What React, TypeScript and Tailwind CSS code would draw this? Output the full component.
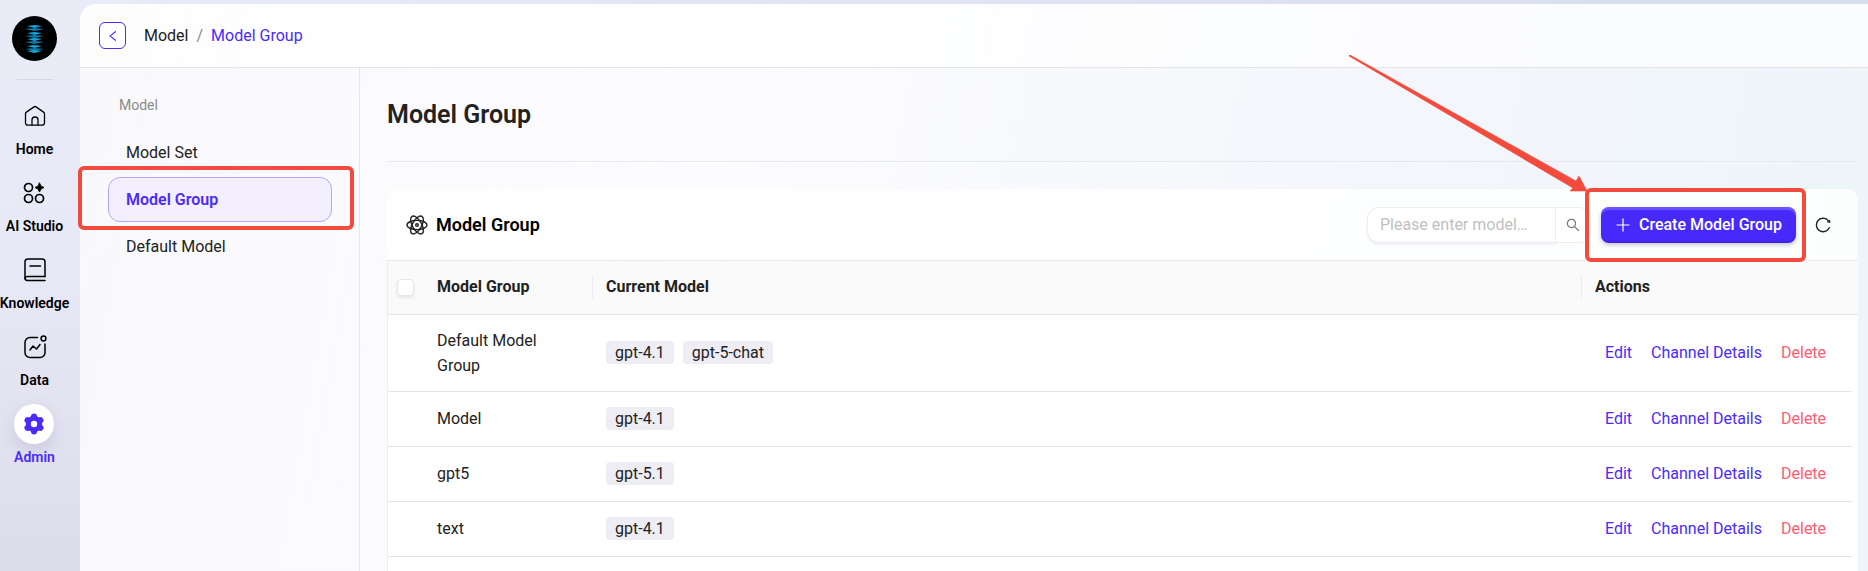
import React, { useState } from 'react';
import { AiOutlineLeft, AiOutlineReload, AiOutlineSearch } from 'react-icons/ai';

interface ModelGroup {
  name: string;
  models: string[];
}

const groups: ModelGroup[] = [
  { name: 'Default Model Group', models: ['gpt-4.1', 'gpt-5-chat'] },
  { name: 'Model', models: ['gpt-4.1'] },
  { name: 'gpt5', models: ['gpt-5.1'] },
  { name: 'text', models: ['gpt-4.1'] },
];

const iconProps = {
  width: 24,
  height: 24,
  viewBox: '0 0 24 24',
  fill: 'none',
  stroke: 'currentColor',
  strokeWidth: 1.5,
  strokeLinecap: 'round' as const,
  strokeLinejoin: 'round' as const,
  'aria-hidden': true,
};

function HomeIcon() {
  return (
    <svg {...iconProps} strokeWidth={1.3}>
      <path d="M11 2.9a1.6 1.6 0 0 1 2 0l7.6 5.2a2 2 0 0 1 .9 1.7V19a2.2 2.2 0 0 1-2.2 2.2H4.7A2.2 2.2 0 0 1 2.5 19V9.8a2 2 0 0 1 .9-1.7Z" />
      <path d="M9 21v-5a3 3 0 0 1 6 0v5" />
    </svg>
  );
}

function StudioIcon() {
  return (
    <svg {...iconProps} strokeWidth={1.7}>
      <circle cx="6.5" cy="6.5" r="4" />
      <circle cx="6.5" cy="17.5" r="4" />
      <circle cx="17.5" cy="17.5" r="4" />
      <path d="M17.500 2 19.100 5l2.900 1.500-2.900 1.600-1.600 2.900-1.600-2.900L13 6.500 15.900 5Z" fill="currentColor" strokeWidth="0.8" />
    </svg>
  );
}

function BookIcon() {
  return (
    <svg {...iconProps}>
      <path d="M22 18.5V4a3 3 0 0 0-3-3H5a3 3 0 0 0-3 3v16a2.5 2.5 0 0 0 2.5 2.5H22" />
      <path d="M22 18.5H4.5A2.4 2.4 0 0 0 2 20.500M7 8h10.500" />
    </svg>
  );
}

function DataIcon() {
  return (
    <svg {...iconProps}>
      <path d="M14.5 2.5H7A5 5 0 0 0 2 7.5v10a5 5 0 0 0 5 5h10a5 5 0 0 0 5-5V9" />
      <path d="m7 15 3-4 3.500 3 3.500-4.500" />
      <circle cx="20.5" cy="3.5" r="2.4" />
    </svg>
  );
}

function AdminIcon() {
  return (
    <svg {...iconProps}>
      <circle cx="12" cy="12" r="7.5" fill="currentColor" />
      <path d="M12 4.500v15M5.500 8.200l13 7.600M18.500 8.200l-13 7.600" strokeWidth="6" />
      <circle cx="12" cy="12" r="3.2" fill="#fff" stroke="none" />
    </svg>
  );
}

function ModelIcon() {
  return (
    <svg {...iconProps} strokeWidth={1.4}>
      <ellipse cx="12" cy="12" rx="10" ry="4.6" />
      <ellipse cx="12" cy="12" rx="10" ry="4.6" transform="rotate(60 12 12)" />
      <ellipse cx="12" cy="12" rx="10" ry="4.6" transform="rotate(120 12 12)" />
      <circle cx="12" cy="12" r="1.3" />
    </svg>
  );
}

function Logo() {
  return (
    <svg width="45" height="45" viewBox="0 0 45 45" role="img" aria-label="Logo">
      <circle cx="22.5" cy="22.5" r="22.5" fill="#000" />
      {[10, 13, 17, 20, 23, 26, 30, 33, 35].map((y, i) => (
        <path
          key={y}
          d={`M${i % 2 ? 13 : 15} ${y}L22.5 ${y - 1}L${i % 2 ? 32 : 30} ${y}L22.5 ${y + 2}Z`}
          fill={i % 2 ? '#0b7aa8' : '#1aa3d8'}
        />
      ))}
    </svg>
  );
}

const navItems = [
  { label: 'Home', icon: <HomeIcon /> },
  { label: 'AI Studio', icon: <StudioIcon /> },
  { label: 'Knowledge', icon: <BookIcon /> },
  { label: 'Data', icon: <DataIcon /> },
  { label: 'Admin', icon: <AdminIcon />, active: true },
];

function Sidebar() {
  return (
    <aside className="w-20 shrink-0 pt-4">
      <div className="flex w-[69px] flex-col items-center">
        <Logo />
        <div className="mt-[18px] mb-4 h-px w-9 bg-[#d5d7e3]" />
        <nav className="flex flex-col items-center gap-3">
          {navItems.map(item => (
            <a
              key={item.label}
              href="#"
              className={`flex flex-col items-center text-sm leading-6 font-semibold ${item.active ? 'text-[#4a2bfb]' : 'text-black'}`}
            >
              <span
                className={`mb-px flex size-10 items-center justify-center rounded-full ${
                  item.active ? 'bg-white shadow-[0_6px_16px_rgba(80,80,140,0.16)]' : ''
                }`}
              >
                {item.icon}
              </span>
              {item.label}
            </a>
          ))}
        </nav>
      </div>
    </aside>
  );
}

function SubNav() {
  const itemCls = 'flex h-[45px] items-center rounded-xl border px-[17px]';

  return (
    <nav className="w-[280px] shrink-0 border-r border-[#e6e7ec] pt-6 pr-[27px] pl-7">
      <p className="mb-3 pl-[11px] text-sm leading-[26px] text-[#8a8a8a]">Model</p>
      <div className="flex flex-col gap-0.5">
        <a href="#" className={`${itemCls} border-transparent`}>Model Set</a>
        <div className="relative">
          <a href="#" className={`${itemCls} border-[#b6a5fa] bg-[#f4effe] font-semibold text-[#4a2bfb]`}>
            Model Group
          </a>
          <div className="pointer-events-none absolute -top-[11px] -right-[22px] -bottom-2 -left-[30px] rounded-md border-4 border-[#f24b3e]" />
        </div>
        <a href="#" className={`${itemCls} border-transparent`}>Default Model</a>
      </div>
    </nav>
  );
}

function Toolbar() {
  const [keyword, setKeyword] = useState('');

  return (
    <div className="flex h-[72px] items-center rounded-t-xl border-b border-[#ebebed] bg-white/85 pr-[26px] pl-[18px]">
      <ModelIcon />
      <h2 className="ml-[7px] text-lg font-semibold text-black">Model Group</h2>
      <form className="ml-auto flex h-9" onSubmit={e => e.preventDefault()}>
        <input
          aria-label="Model"
          className="w-[189px] rounded-l-xl border border-[#ececf1] bg-white px-3 shadow-[0_2px_3px_rgba(60,60,110,0.07)] outline-none placeholder:text-[#bfbfbf]"
          placeholder="Please enter model…"
          value={keyword}
          onChange={e => setKeyword(e.target.value)}
        />
        <button
          type="submit"
          aria-label="Search"
          className="flex w-[35px] items-center justify-center rounded-r-xl border border-l-0 border-[#ececf1] bg-white text-[#7d7d7d]"
        >
          <AiOutlineSearch size={16} />
        </button>
      </form>
      <div className="relative ml-2.5">
        <button
          type="button"
          className="flex h-9 items-center gap-2 rounded-lg bg-[#4829fc] px-3.5 font-medium text-white shadow-[0_2px_4px_rgba(30,20,90,0.25),inset_0_3px_1px_rgba(255,255,255,0.2),inset_0_-2px_2px_rgba(0,0,0,0.12)]"
        >
          <svg width="16" height="16" viewBox="0 0 16 16" stroke="currentColor" strokeWidth="1.2" aria-hidden>
            <path d="M8 1.500v13M1.500 8h13" />
          </svg>
          Create Model Group
        </button>
        <div className="pointer-events-none absolute -top-[19px] -right-2.5 -bottom-[19px] -left-4 rounded-md border-4 border-[#f24b3e]" />
        <svg
          className="pointer-events-none absolute -top-[152px] -left-[252px]"
          width="240"
          height="140"
          viewBox="0 0 240 140"
          fill="#f24b3e"
          aria-hidden
        >
          <path d="M0 0 1 0 227 126 230 121 238 136 221 136 224 133 0 1Z" stroke="#f24b3e" strokeWidth="0.6" />
        </svg>
      </div>
      <button type="button" aria-label="Refresh" className="ml-[18px] text-[#222]">
        <AiOutlineReload size={18} />
      </button>
    </div>
  );
}

function GroupTable() {
  return (
    <div className="flex-1 border-l border-[#ededf0] bg-white">
      <table className="w-full table-fixed border-collapse text-left">
        <colgroup>
          <col className="w-9" />
          <col className="w-[169px]" />
          <col />
          <col className="w-[270px]" />
          <col className="w-1.5" />
        </colgroup>
        <thead className="bg-[#fafafa] font-semibold">
          <tr className="h-[53px] border-b border-[#e3e3ea]">
            <th className="pl-[9px]">
              <input
                type="checkbox"
                aria-label="Select all"
                className="block size-[17px] appearance-none rounded border border-[#e6e5f2] bg-white shadow-[0_2px_3px_rgba(70,60,140,0.1)]"
              />
            </th>
            <th className="p-0">
              <div className="border-r border-[#ececee] pl-[13px]">Model Group</div>
            </th>
            <th className="p-0">
              <div className="border-r border-[#ececee] pl-[13px]">Current Model</div>
            </th>
            <th className="pl-[13px]">Actions</th>
            <th />
          </tr>
        </thead>
        <tbody>
          {groups.map(group => (
            <tr key={group.name} className="h-[55px]">
              <td className="border-b border-[#e3e3ea]" />
              <td className="border-b border-[#e3e3ea] px-[13px] py-[13px] leading-[25px]">{group.name}</td>
              <td className="border-b border-[#e3e3ea] px-[13px]">
                <div className="flex gap-[9px]">
                  {group.models.map(model => (
                    <span key={model} className="rounded-sm bg-[#eeedf4] px-[9px] leading-[23px]">{model}</span>
                  ))}
                </div>
              </td>
              <td className="border-b border-[#e3e3ea] pl-[23px]">
                <div className="flex gap-[19px] text-[#4a2bfb]">
                  <button type="button">Edit</button>
                  <button type="button">Channel Details</button>
                  <button type="button" className="text-[#ff5b72]">Delete</button>
                </div>
              </td>
              <td />
            </tr>
          ))}
        </tbody>
      </table>
    </div>
  );
}

export default function App() {
  return (
    <div className="flex min-h-screen overflow-hidden bg-[linear-gradient(180deg,#e9ebf7_0%,#e8e9f6_45%,#dddcea_100%)] font-[Roboto,sans-serif] text-base text-[#222]">
      <Sidebar />
      <div className="flex min-w-0 flex-1 flex-col bg-[linear-gradient(90deg,#e9ebf7,#d5ddf0)] pt-1">
        <div className="flex flex-1 flex-col rounded-tl-2xl bg-[linear-gradient(100deg,#f9f9fc_0%,#fcfcfe_35%,#f4f6fb_70%,#edf5f9_100%)]">
          <header className="flex h-16 items-center rounded-tl-2xl border-b border-[#e2e4ea] bg-white/70 pl-[19px]">
            <button
              type="button"
              aria-label="Back"
              className="flex size-[27px] items-center justify-center rounded-md border border-[#4a2bfb] bg-white text-[#4a2bfb]"
            >
              <AiOutlineLeft size={14} />
            </button>
            <nav className="ml-[18px] flex gap-2" aria-label="Breadcrumb">
              <a href="#">Model</a>
              <span className="text-[#8a8a8a]">/</span>
              <a href="#" className="text-[#4a2bfb]">Model Group</a>
            </nav>
          </header>
          <div className="flex flex-1">
            <SubNav />
            <main className="flex min-w-0 flex-1 flex-col pr-2.5 pl-[27px]">
              <h1 className="mb-[27px] border-b border-[#e6e8ed] pt-[31px] pb-[30px] text-[25px] leading-8 font-semibold">Model Group</h1>
              <Toolbar />
              <GroupTable />
            </main>
          </div>
        </div>
      </div>
    </div>
  );
}
